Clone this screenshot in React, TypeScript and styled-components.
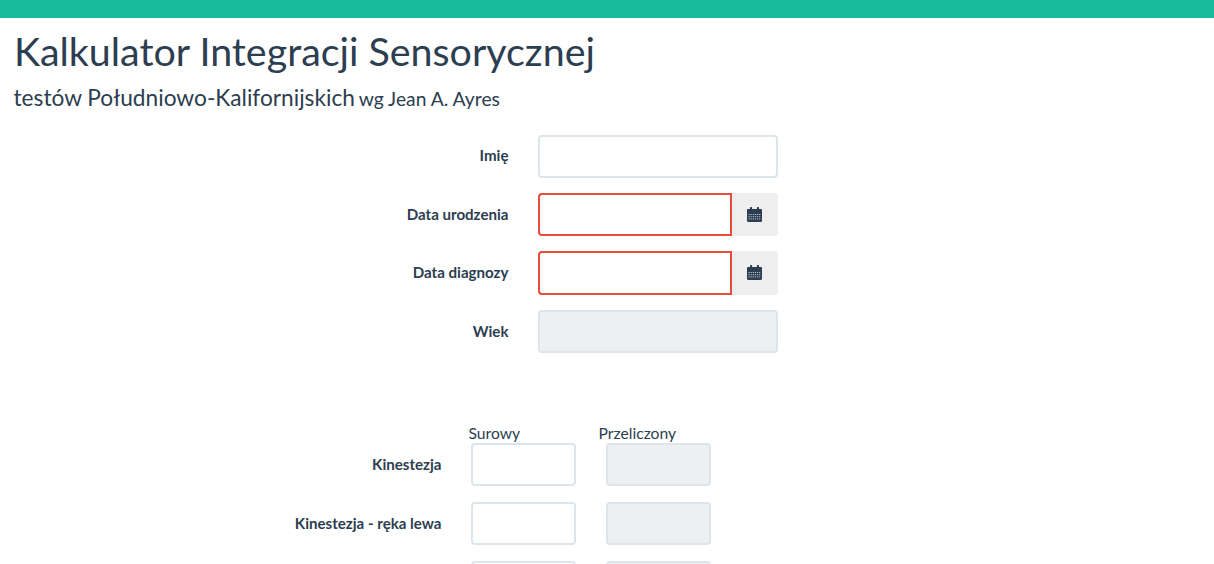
import React from "react";
import styled, { createGlobalStyle } from "styled-components";

const Global = createGlobalStyle`
  html, body { margin: 0; padding: 0; overflow: hidden; background: #fff; }
  body {
    font-family: Lato, "Liberation Sans", sans-serif;
    font-size: 15px;
    line-height: 1.42857;
    color: #2c3e50;
  }
  * { box-sizing: border-box; }
`;

const TopBar = styled.div`
  height: 18px;
  background: #18bc9c;
`;

const Page = styled.main`
  padding: 0 14px;
`;

const Title = styled.h1`
  margin: 11px 0 0;
  font-size: 39.4px;
  font-weight: 400;
  line-height: 1.1;
`;

const Subtitle = styled.h3`
  margin: 14px 0 23.2px -0.5px;
  font-size: 22.7px;
  font-weight: 400;
  line-height: 1.1;
`;

const SubtitleNote = styled.small`
  margin-left: -2px;
  font-size: 19.3px;
  font-weight: 400;
`;

const Form = styled.form`
  display: flex;
  flex-direction: column;
`;

const Row = styled.div`
  display: flex;
  align-items: center;
  margin-bottom: 15px;
  height: 43.4px;
`;

const Label = styled.label<{ $width: number }>`
  width: ${(p) => p.$width}px;
  flex: none;
  margin-right: 29.5px;
  text-align: right;
  font-size: 15.1px;
  font-weight: 700;
`;

const Input = styled.input<{ $width?: number; $error?: boolean; $attached?: boolean }>`
  display: block;
  width: ${(p) => p.$width ?? 240}px;
  height: 43.4px;
  padding: 10px 15px;
  border: 2px solid ${(p) => (p.$error ? "#e74c3c" : "#dce4ec")};
  border-radius: ${(p) => (p.$attached ? "4px 0 0 4px" : "4px")};
  background: ${(p) => (p.disabled ? "#ecf0f1" : "#fff")};
  font: inherit;
  outline: none;
`;

const InputGroup = styled.div`
  display: flex;
  width: 240px;
`;

const Addon = styled.span`
  flex: 1;
  display: flex;
  align-items: center;
  justify-content: center;
  padding-right: 1px;
  background: #eee;
  border-radius: 0 4px 4px 0;
`;

const ScoreSection = styled.section`
  margin-top: 39.8px;
`;

const ScoreHeader = styled.div`
  display: flex;
  height: 21px;
  margin-top: 14px;
  padding-left: 454.5px;
  font-size: 15.7px;
`;

const ScoreHeading = styled.span<{ $width: number }>`
  width: ${(p) => p.$width}px;
  flex: none;
`;

const ScoreRowLine = styled(Row)`
  margin-bottom: 15.6px;
`;

const ScoreInputs = styled.div`
  display: flex;
  gap: 30px;
`;

const CalendarIcon = () => (
  <svg width="15" height="15" viewBox="0 0 15 15" aria-hidden="true">
    <path fill="#2c3e50" d="M0 3.2C0 2.5.5 2 1.2 2H3V.8C3 .4 3.3 0 3.8 0h.6c.4 0 .7.4.7.8V2h4.8V.8c0-.4.3-.8.8-.8h.6c.4 0 .7.4.7.8V2h1.8c.7 0 1.2.5 1.2 1.2v10.6c0 .7-.5 1.2-1.2 1.2H1.2C.5 15 0 14.5 0 13.8z" />
    {[7, 9.2, 11.4].map((y) =>
      [1.5, 3.6, 5.7, 7.8, 9.9, 12].map((x) => (
        <rect key={`${x}-${y}`} x={x} y={y} width="1.3" height="1" fill="#aeb9c3" />
      ))
    )}
  </svg>
);

const DateField = ({ id }: { id: string }) => (
  <InputGroup>
    <Input id={id} $width={194} $error $attached />
    <Addon>
      <CalendarIcon />
    </Addon>
  </InputGroup>
);

const ScoreRow = ({ label, id }: { label: string; id: string }) => (
  <ScoreRowLine>
    <Label $width={427.5} htmlFor={id}>
      {label}
    </Label>
    <ScoreInputs>
      <Input id={id} $width={105} />
      <Input $width={105} disabled />
    </ScoreInputs>
  </ScoreRowLine>
);

export default function App() {
  return (
    <>
      <Global />
      <TopBar />
      <Page>
        <Title>Kalkulator Integracji Sensorycznej</Title>
        <Subtitle>
          testów Południowo-Kalifornijskich <SubtitleNote>wg Jean A. Ayres</SubtitleNote>
        </Subtitle>
        <Form>
          <Row>
            <Label $width={494.5} htmlFor="name">Imię</Label>
            <Input id="name" />
          </Row>
          <Row>
            <Label $width={494.5} htmlFor="birth">Data urodzenia</Label>
            <DateField id="birth" />
          </Row>
          <Row>
            <Label $width={494.5} htmlFor="diag">Data diagnozy</Label>
            <DateField id="diag" />
          </Row>
          <Row>
            <Label $width={494.5} htmlFor="age">Wiek</Label>
            <Input id="age" disabled />
          </Row>
          <ScoreSection>
            <ScoreHeader>
              <ScoreHeading $width={130}>Surowy</ScoreHeading>
              <ScoreHeading $width={130}>Przeliczony</ScoreHeading>
            </ScoreHeader>
            <ScoreRow label="Kinestezja" id="k1" />
            <ScoreRow label="Kinestezja - ręka lewa" id="k2" />
            <ScoreRow label="" id="k3" />
          </ScoreSection>
        </Form>
      </Page>
    </>
  );
}
